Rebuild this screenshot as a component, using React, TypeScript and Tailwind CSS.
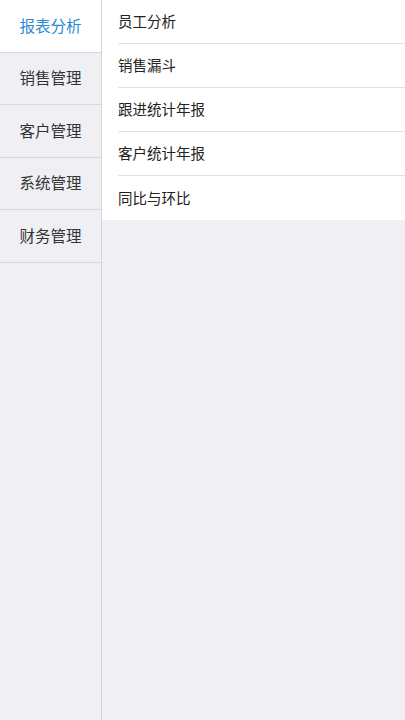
import React from "react";

const left = ["报表分析", "销售管理", "客户管理", "系统管理", "财务管理"];
const right = ["员工分析", "销售漏斗", "跟进统计年报", "客户统计年报", "同比与环比"];

export default function App() {
  return (
    <div
      className="flex h-[720px] w-[405px] bg-[#efeff4]"
      style={{ fontFamily: '"Noto Sans CJK SC", "Noto Sans", sans-serif' }}
    >
      <div className="flex w-[102px] shrink-0 flex-col border-r border-[#d4d4d8]">
        {left.map((t, i) => (
          <div
            key={t}
            className={
              i === 0
                ? "flex h-[52.5px] items-center justify-center border-b border-[#d8d8dc] bg-white pb-[1px] text-[15.5px] leading-none text-[#2a8ad6]"
                : "flex h-[52.5px] items-center justify-center border-b border-[#d8d8dc] pb-[1px] text-[15.5px] leading-none text-[#333333]"
            }
          >
            {t}
          </div>
        ))}
      </div>
      <div className="flex-1">
        <div className="bg-white pl-4">
          {right.map((t, i) => (
            <div
              key={t}
              className={
                i === right.length - 1
                  ? "flex h-[44px] items-center text-[14.5px] leading-none text-[#222222]"
                  : "flex h-[44px] items-center border-b border-[#e0e0e0] text-[14.5px] leading-none text-[#222222]"
              }
            >
              {t}
            </div>
          ))}
        </div>
      </div>
    </div>
  );
}
